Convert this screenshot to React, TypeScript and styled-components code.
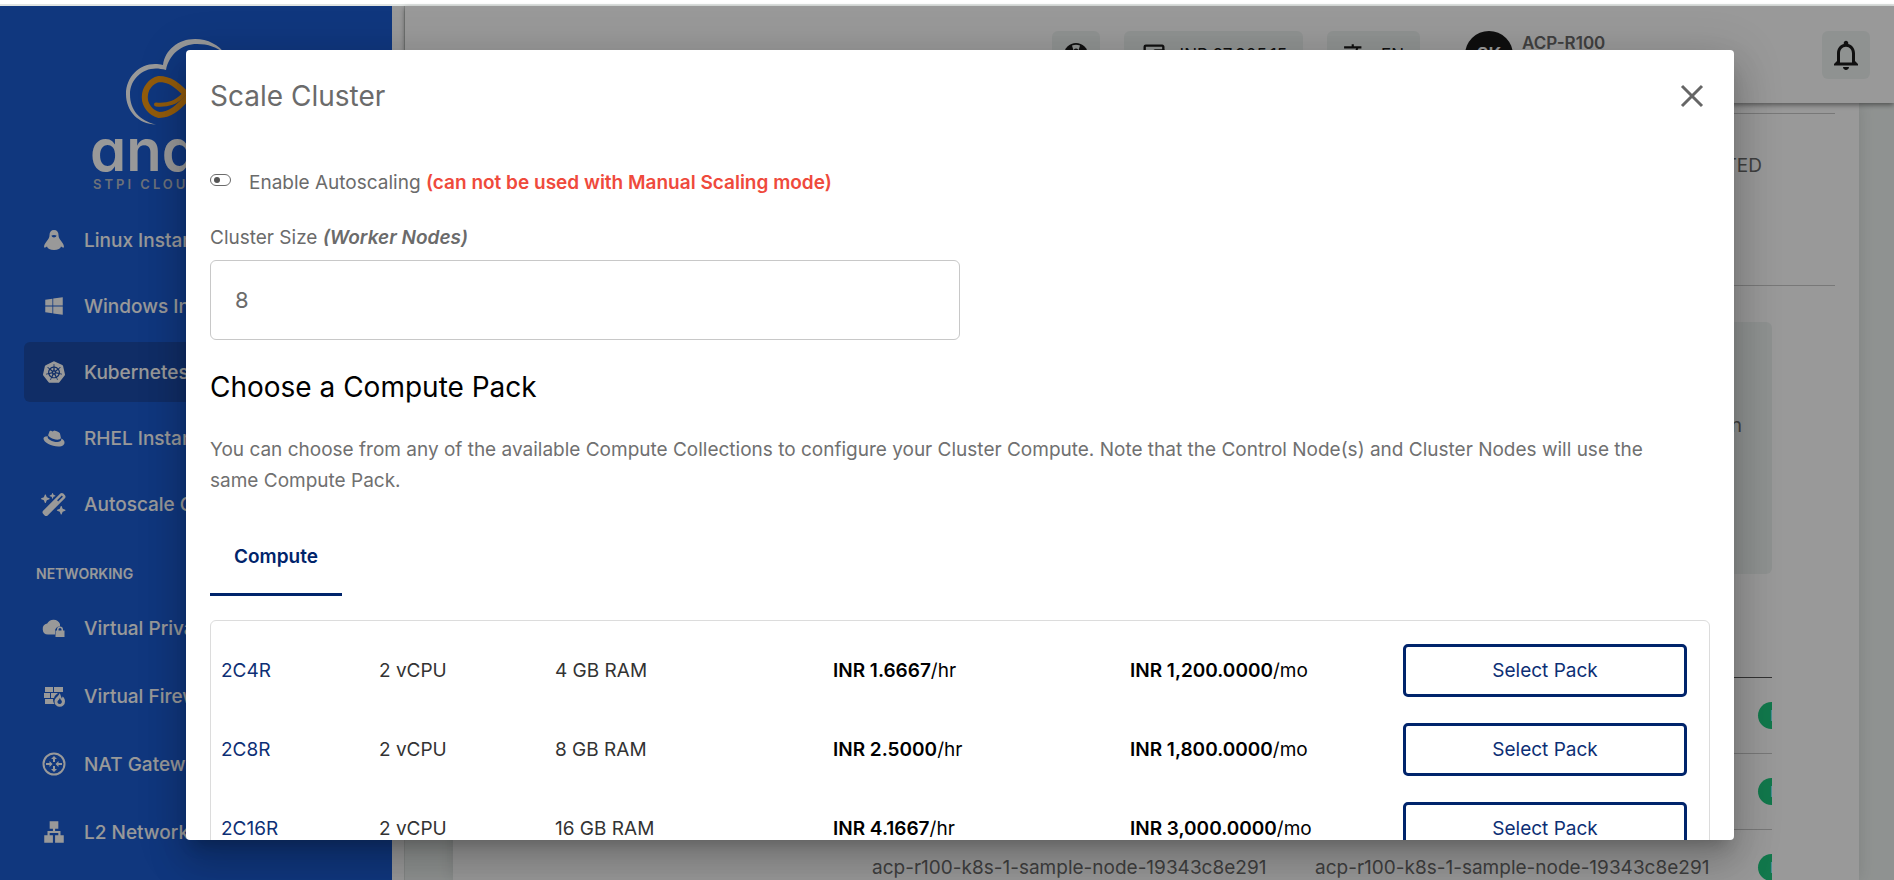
import React from "react";
import styled, { createGlobalStyle } from "styled-components";
import { FaRedhat, FaWandMagicSparkles, FaWindows } from "react-icons/fa6";
import { MdLan, MdNotificationsNone, MdOutlineAccountBalanceWallet, MdTranslate } from "react-icons/md";
import { SiKubernetes } from "react-icons/si";

const navy = "#00246b";
const grey = "#6b6b6b";

const GlobalStyle = createGlobalStyle`
  * { box-sizing: border-box; }
  body {
    margin: 0;
    background: #fff;
    color: #1c1c1c;
    font-family: Inter, "Liberation Sans", sans-serif;
    font-size: 19px;
  }
  button, input { font-family: inherit; }
`;

const Page = styled.div`
  height: 100vh;
  overflow: hidden;
  padding-top: 4px;
`;

const Shell = styled.div`
  position: relative;
  display: flex;
  height: 100%;
  border-top: 2px solid #e0e4e2;
  background: #fff;
`;

/* Sidebar */

const Sidebar = styled.aside`
  flex: 0 0 392px;
  overflow: hidden;
  padding: 32px 24px 0;
  background: #1b5cd2;
  color: #fff;
`;

const Brand = styled.div`
  display: flex;
  flex-direction: column;
  align-items: flex-start;
  height: 172px;
  padding-left: 66px;
`;

const BrandMark = styled.svg`
  display: block;
  flex: none;
  margin-left: 34px;
`;

const BrandName = styled.div`
  font-size: 58px;
  font-weight: 600;
  line-height: 48px;
  font-feature-settings: "cv11";
`;

const BrandCaption = styled.div`
  margin: 2px 0 0 3px;
  color: #b4bccb;
  font-size: 13px;
  font-weight: 600;
  line-height: 16px;
  letter-spacing: 3px;
`;

const NavList = styled.ul<{ $gap: number }>`
  display: flex;
  flex-direction: column;
  gap: ${(p) => p.$gap}px;
  margin: 0;
  padding: 0;
  list-style: none;
`;

const NavLink = styled.a<{ $active?: boolean }>`
  display: flex;
  align-items: center;
  gap: 17px;
  height: 60px;
  padding: 0 17px;
  border-radius: 6px;
  background: ${(p) => (p.$active ? "#1b4caa" : "transparent")};
  color: #fff;
  font-weight: 500;
  text-decoration: none;
  white-space: nowrap;

  svg { flex: 0 0 26px; }
`;

const NavHeading = styled.h2`
  margin: 29px 12px 13px;
  font-size: 14px;
  font-weight: 600;
  line-height: 22px;
`;

/* Header and page behind the dialog */

const Main = styled.main`
  display: flex;
  flex: 1;
  flex-direction: column;
  min-width: 0;
  margin-left: 12px;
  border-left: 1px solid #dde2e0;
  background: #eff4f2;
`;

const Header = styled.header`
  z-index: 1;
  display: flex;
  flex: 0 0 97px;
  align-items: center;
  justify-content: flex-end;
  gap: 24px;
  padding-right: 24px;
  background: #fff;
  box-shadow: 0 2px 5px rgba(0, 0, 0, 0.45);
`;

const HeaderButton = styled.button`
  display: flex;
  align-items: center;
  justify-content: center;
  gap: 12px;
  min-width: 48px;
  height: 48px;
  padding: 0 16px;
  border: 0;
  border-radius: 6px;
  background: #eff4f2;
  color: #1c1c1c;
  font-size: 17px;
  white-space: nowrap;
  svg { flex: none; }
`;

const IconButton = styled(HeaderButton)`
  padding: 0;
`;

const Account = styled.div`
  display: flex;
  flex: 0 0 354px;
  gap: 9px;
  padding-left: 21px;
`;

const Avatar = styled.span`
  display: flex;
  align-items: center;
  justify-content: center;
  width: 48px;
  height: 48px;
  border-radius: 50%;
  background: #1a1a1a;
  color: #fff;
  font-size: 18px;
  font-weight: 600;
`;

const AccountName = styled.span`
  color: ${grey};
  font-size: 17px;
  font-weight: 600;
  line-height: 24px;
`;

const ContentCard = styled.section`
  flex: 1;
  margin: 0 35px 0 48px;
  padding: 10px 24px 0;
  overflow: hidden;
  background: #fff;
  box-shadow: 0 0 16px rgba(0, 0, 0, 0.12);
  color: ${grey};
`;

const StatusRow = styled.div`
  display: flex;
  justify-content: flex-end;
  height: 173px;
  padding: 38px 73px 0 0;
  border: solid #c8c8c8;
  border-width: 1px 0;
  line-height: 28px;
`;

const Inset = styled.div`
  margin-right: 63px;
  overflow: hidden;
`;

const Notice = styled.div`
  display: flex;
  align-items: center;
  justify-content: flex-end;
  height: 252px;
  margin: 36px 0 71px;
  padding: 0 30px 46px 0;
  border-radius: 6px;
  background: #eff4f2;
`;

const NodeTable = styled.table`
  width: 1500px;
  table-layout: fixed;
  border-collapse: collapse;

  th {
    height: 32px;
    padding: 0;
    border-bottom: 1px solid #555;
  }
  td {
    height: 76px;
    padding: 0;
    border-bottom: 1px solid #c8c8c8;
    white-space: nowrap;
  }
`;

const Pill = styled.span`
  display: block;
  width: max-content;
  padding: 0 12px;
  border-radius: 14px;
  background: #1fc87f;
  color: #fff;
  font-size: 15px;
  line-height: 27px;
`;

/* Dialog */

const Overlay = styled.div`
  position: absolute;
  inset: 0;
  z-index: 2;
  display: flex;
  padding: 44px 160px 40px 186px;
  background: rgba(0, 0, 0, 0.4);
`;

const Dialog = styled.div`
  flex: 1;
  min-width: 0;
  overflow: hidden;
  padding: 0 24px;
  border-radius: 4px;
  background: #fff;
  box-shadow:
    0 11px 15px -7px rgba(0, 0, 0, 0.2),
    0 24px 38px 3px rgba(0, 0, 0, 0.14),
    0 9px 46px 8px rgba(0, 0, 0, 0.12);
`;

const DialogHeader = styled.div`
  display: flex;
  align-items: center;
  justify-content: space-between;
  height: 92px;
`;

const Title = styled.h1`
  margin: 0;
  color: ${grey};
  font-size: 28px;
  font-weight: 400;
`;

const CloseButton = styled.button`
  display: flex;
  padding: 6px;
  border: 0;
  background: none;
  color: #666;
`;

const SwitchRow = styled.label`
  display: flex;
  align-items: center;
  height: 32px;
  margin-top: 24px;
  color: ${grey};
  white-space: pre;
`;

const Switch = styled.input`
  display: flex;
  align-items: center;
  width: 21px;
  height: 12px;
  margin: 0 18px 4px 0;
  padding-left: 3px;
  appearance: none;
  border: 1px solid ${grey};
  border-radius: 6px;

  &::before {
    width: 6px;
    height: 6px;
    border-radius: 50%;
    background: #555;
    content: "";
  }
`;

const Warning = styled.strong`
  color: #ef4a3c;
  font-weight: 600;
`;

const Field = styled.div`
  display: flex;
  flex-direction: column;
  gap: 8px;
  width: 50%;
  margin-top: 26px;
  color: ${grey};

  label { line-height: 28px; }
  em { font-weight: 600; }
`;

const NumberBox = styled.input`
  height: 80px;
  padding: 0 24px;
  border: 1px solid #c8c8c8;
  border-radius: 6px;
  color: ${grey};
  font-size: 22px;
`;

const SectionTitle = styled.h2`
  margin: 29px 0 0;
  color: #000;
  font-size: 28px;
  font-weight: 400;
  line-height: 36px;
`;

const Lead = styled.p`
  margin: 29px 0 0;
  padding-right: 28px;
  color: #707070;
  line-height: 31px;
`;

const Tabs = styled.div`
  display: flex;
  margin: 24px 0;
`;

const Tab = styled.button`
  height: 76px;
  padding: 0 24px;
  border: 0;
  border-bottom: 3px solid ${navy};
  background: none;
  color: ${navy};
  font-size: 19px;
  font-weight: 600;
`;

const PackBox = styled.div`
  padding: 10px 0 24px;
  border: 1px solid #dcdcdc;
  border-radius: 6px;
`;

const PackTable = styled.table`
  width: 100%;
  table-layout: fixed;
  border-collapse: collapse;
  color: #333;

  td {
    height: 79px;
    padding: 0 0 0 10px;
    white-space: nowrap;
  }
`;

const PackName = styled.td`
  color: #0d2f75;
`;

const Price = styled.td`
  color: #000;
  b { font-weight: 600; }
`;

const SelectButton = styled.button`
  display: block;
  width: calc(100% - 22px);
  height: 53px;
  border: 3px solid ${navy};
  border-radius: 5px;
  background: #fff;
  color: #0d2f75;
  font-size: 19px;
`;

/* Icons */

const PenguinIcon = () => (
  <svg width="26" height="26" viewBox="0 0 26 26" aria-hidden="true">
    <path
      fill="currentColor"
      fillRule="evenodd"
      d="M13 3c-3 0-4.500 2-4.500 5 0 2.500-1 4-3 6.500-1.500 2-2.500 3.500-2.500 6 1.500 0 2.500-.5 3-1 .5 2 3 3.500 7 3.500s6.500-1.500 7-3.500c.5.5 1.500 1 3 1 0-2.500-1-4-2.500-6-2-2.500-3-4-3-6.500 0-3-1.500-5-4.500-5zM10.500 8.500l2.500-.5 2.500.5c0 1-1.500 2-2.500 2s-2.500-1-2.500-2z"
    />
  </svg>
);

const CloudLockIcon = () => (
  <svg width="26" height="26" viewBox="0 0 26 26" aria-hidden="true">
    <path fill="currentColor" d="M7 19.500a5.500 5.500 0 0 1-.8-10.900A7 7 0 0 1 19 9v2.500a4.500 4.500 0 0 0-5 4.500v3.500z" />
    <path fill="currentColor" fillRule="evenodd" d="M16 15.500v-1a3 3 0 0 1 6 0v1h1.500V22h-9v-6.500zm1.500 0h3v-1a1.500 1.500 0 0 0-3 0z" />
  </svg>
);

const FirewallIcon = () => (
  <svg width="26" height="26" viewBox="0 0 26 26" fill="currentColor" aria-hidden="true">
    <path d="M4 4h8v5H4zM13 4h9v5h-9zM3 10h6v5H3zM10 10h7c-2 1.500-3.500 3-4 5h-3zM4 16h8c0 2 .5 4 1.500 5H4z" />
    <path fillRule="evenodd" d="M18.500 10c0 3-5 4.500-5 8.500a5 5 0 0 0 10.500 0c0-2.500-1-4-2.500-5l-.5 2c-1-1-1-3.500-2.500-5.500zM18.700 15c1.300 1 .5 2 1.800 2.500 1 1.500 0 3.500-1.800 3.500s-2.700-1.500-2-3c.8-1 1.800-1.500 2-3z" />
  </svg>
);

const NatIcon = () => (
  <svg width="26" height="26" viewBox="0 0 26 26" fill="none" aria-hidden="true">
    <circle cx="13" cy="13" r="10.500" stroke="currentColor" strokeWidth="2" />
    <path
      fill="currentColor"
      d="M13 5l3 3h-2v3h-2V8h-2zM13 21l3-3h-2v-3h-2v3h-2zM11.500 13l-3-3v2H5v2h3.500v2zM14.500 13l3-3v2H21v2h-3.500v2z"
    />
  </svg>
);

const SupportIcon = () => (
  <svg width="26" height="26" viewBox="0 0 26 26" aria-hidden="true">
    <circle cx="13" cy="13" r="12" fill="currentColor" />
    <path d="M9 3.500l2 6.500h4l2-6.500a10 10 0 0 0-8 0z" fill="#eff4f2" />
    <path d="M10 5c2-1 4-1 6 0l-.5 1.500h-5z" fill="#eff4f2" />
    <circle cx="13" cy="9" r="2.500" fill="currentColor" />
    <circle cx="13" cy="9.500" r="1" fill="#eff4f2" />
    <path d="M8 19c0-6 10-6 10 0-3 3-7 3-10 0z" fill="#eff4f2" />
  </svg>
);

const Logo = () => (
  <BrandMark width="130" height="88" viewBox="124 38 130 88" fill="none" aria-hidden="true">
    <path
      fill="#fff"
      d="M156 124.500C138 124 126 111 126 94c0-17 13-30 29-30 3 0 5 .3 8 1 2-15 15-26 32-26 13 0 24 6 30 15-8-7-17-10-28-10-15 0-28 10-31 26-4-1-7-1.500-10-1.500-14 0-26 11-26 26 0 15 9 26 26 30z"
    />
    <path
      stroke="#f69a14"
      strokeWidth="6"
      d="M186 94C177 85 170 79 159 79a18.500 18.500 0 0 0 0 36c13 0 20-9 28-17s15-16 26-16"
    />
    <path stroke="#f69a14" strokeWidth="4" strokeLinecap="round" d="M156 104.500c13 1 20-2 28-10" />
  </BrandMark>
);

const computeLinks = [
  { label: "Linux Instances", icon: <PenguinIcon /> },
  { label: "Windows Instances", icon: <FaWindows size={20} /> },
  { label: "Kubernetes", icon: <SiKubernetes size={22} />, active: true },
  { label: "RHEL Instances", icon: <FaRedhat size={21} /> },
  { label: "Autoscale Groups", icon: <FaWandMagicSparkles size={25} /> },
];

const networkLinks = [
  { label: "Virtual Private Cloud", icon: <CloudLockIcon /> },
  { label: "Virtual Firewall", icon: <FirewallIcon /> },
  { label: "NAT Gateway", icon: <NatIcon /> },
  { label: "L2 Networks", icon: <MdLan size={26} /> },
];

const packs = [
  { name: "2C4R", cpu: "2 vCPU", ram: "4 GB RAM", hour: "INR 1.6667", month: "INR 1,200.0000" },
  { name: "2C8R", cpu: "2 vCPU", ram: "8 GB RAM", hour: "INR 2.5000", month: "INR 1,800.0000" },
  { name: "2C16R", cpu: "2 vCPU", ram: "16 GB RAM", hour: "INR 4.1667", month: "INR 3,000.0000" },
];

const packColumns = [158, 176, 278, 297, 273, 316];
const nodeColumns = [395, 443, 443, 219];
const nodeName = "acp-r100-k8s-1-sample-node-19343c8e291";

type LinkItem = { label: string; icon: React.ReactNode; active?: boolean };

const Nav = ({ items, gap }: { items: LinkItem[]; gap: number }) => (
  <NavList $gap={gap}>
    {items.map((item) => (
      <li key={item.label}>
        <NavLink href="#" $active={item.active}>
          {item.icon}
          {item.label}
        </NavLink>
      </li>
    ))}
  </NavList>
);

const Columns = ({ widths }: { widths: number[] }) => (
  <colgroup>
    {widths.map((w, i) => (
      <col key={i} width={w} />
    ))}
  </colgroup>
);

export default function App() {
  return (
    <>
      <GlobalStyle />
      <Page>
        <Shell>
          <Sidebar>
            <Brand>
              <Logo />
              <BrandName>ananta</BrandName>
              <BrandCaption>STPI CLOUD</BrandCaption>
            </Brand>
            <Nav items={computeLinks} gap={6} />
            <NavHeading>NETWORKING</NavHeading>
            <Nav items={networkLinks} gap={8} />
          </Sidebar>

          <Main>
            <Header>
              <IconButton aria-label="Support">
                <SupportIcon />
              </IconButton>
              <HeaderButton>
                <MdOutlineAccountBalanceWallet size={28} />
                INR 97,905.15
              </HeaderButton>
              <HeaderButton>
                <MdTranslate size={26} />
                EN
              </HeaderButton>
              <Account>
                <Avatar>SK</Avatar>
                <AccountName>ACP-R100</AccountName>
              </Account>
              <IconButton aria-label="Notifications">
                <MdNotificationsNone size={36} />
              </IconButton>
            </Header>
            <ContentCard>
              <StatusRow>CREATED</StatusRow>
              <Inset>
                <Notice>n</Notice>
                <NodeTable>
                  <Columns widths={nodeColumns} />
                  <thead>
                    <tr>
                      <th colSpan={4} />
                    </tr>
                  </thead>
                  <tbody>
                    {[1, 2, 3].map((n) => (
                      <tr key={n}>
                        <td />
                        <td>{nodeName}</td>
                        <td>{nodeName}</td>
                        <td>
                          <Pill>Running</Pill>
                        </td>
                      </tr>
                    ))}
                  </tbody>
                </NodeTable>
              </Inset>
            </ContentCard>
          </Main>

          <Overlay>
            <Dialog role="dialog" aria-labelledby="dialog-title">
              <DialogHeader>
                <Title id="dialog-title">Scale Cluster</Title>
                <CloseButton aria-label="Close">
                  <svg width="24" height="24" viewBox="0 0 24 24" stroke="currentColor" strokeWidth="3">
                    <path d="M2 2l20 20M22 2L2 22" />
                  </svg>
                </CloseButton>
              </DialogHeader>

              <SwitchRow>
                <Switch type="checkbox" role="switch" />
                Enable Autoscaling <Warning>(can not be used with Manual Scaling mode)</Warning>
              </SwitchRow>

              <Field>
                <label htmlFor="cluster-size">
                  Cluster Size <em>(Worker Nodes)</em>
                </label>
                <NumberBox id="cluster-size" defaultValue="8" />
              </Field>

              <SectionTitle>Choose a Compute Pack</SectionTitle>
              <Lead>
                You can choose from any of the available Compute Collections to configure your Cluster Compute. Note
                that the Control Node(s) and Cluster Nodes will use the same Compute Pack.
              </Lead>

              <Tabs role="tablist">
                <Tab role="tab" aria-selected="true">
                  Compute
                </Tab>
              </Tabs>

              <PackBox>
                <PackTable>
                  <Columns widths={packColumns} />
                  <tbody>
                    {packs.map((p) => (
                      <tr key={p.name}>
                        <PackName>{p.name}</PackName>
                        <td>{p.cpu}</td>
                        <td>{p.ram}</td>
                        <Price>
                          <b>{p.hour}</b>/hr
                        </Price>
                        <Price>
                          <b>{p.month}</b>/mo
                        </Price>
                        <td>
                          <SelectButton>Select Pack</SelectButton>
                        </td>
                      </tr>
                    ))}
                  </tbody>
                </PackTable>
              </PackBox>
            </Dialog>
          </Overlay>
        </Shell>
      </Page>
    </>
  );
}
